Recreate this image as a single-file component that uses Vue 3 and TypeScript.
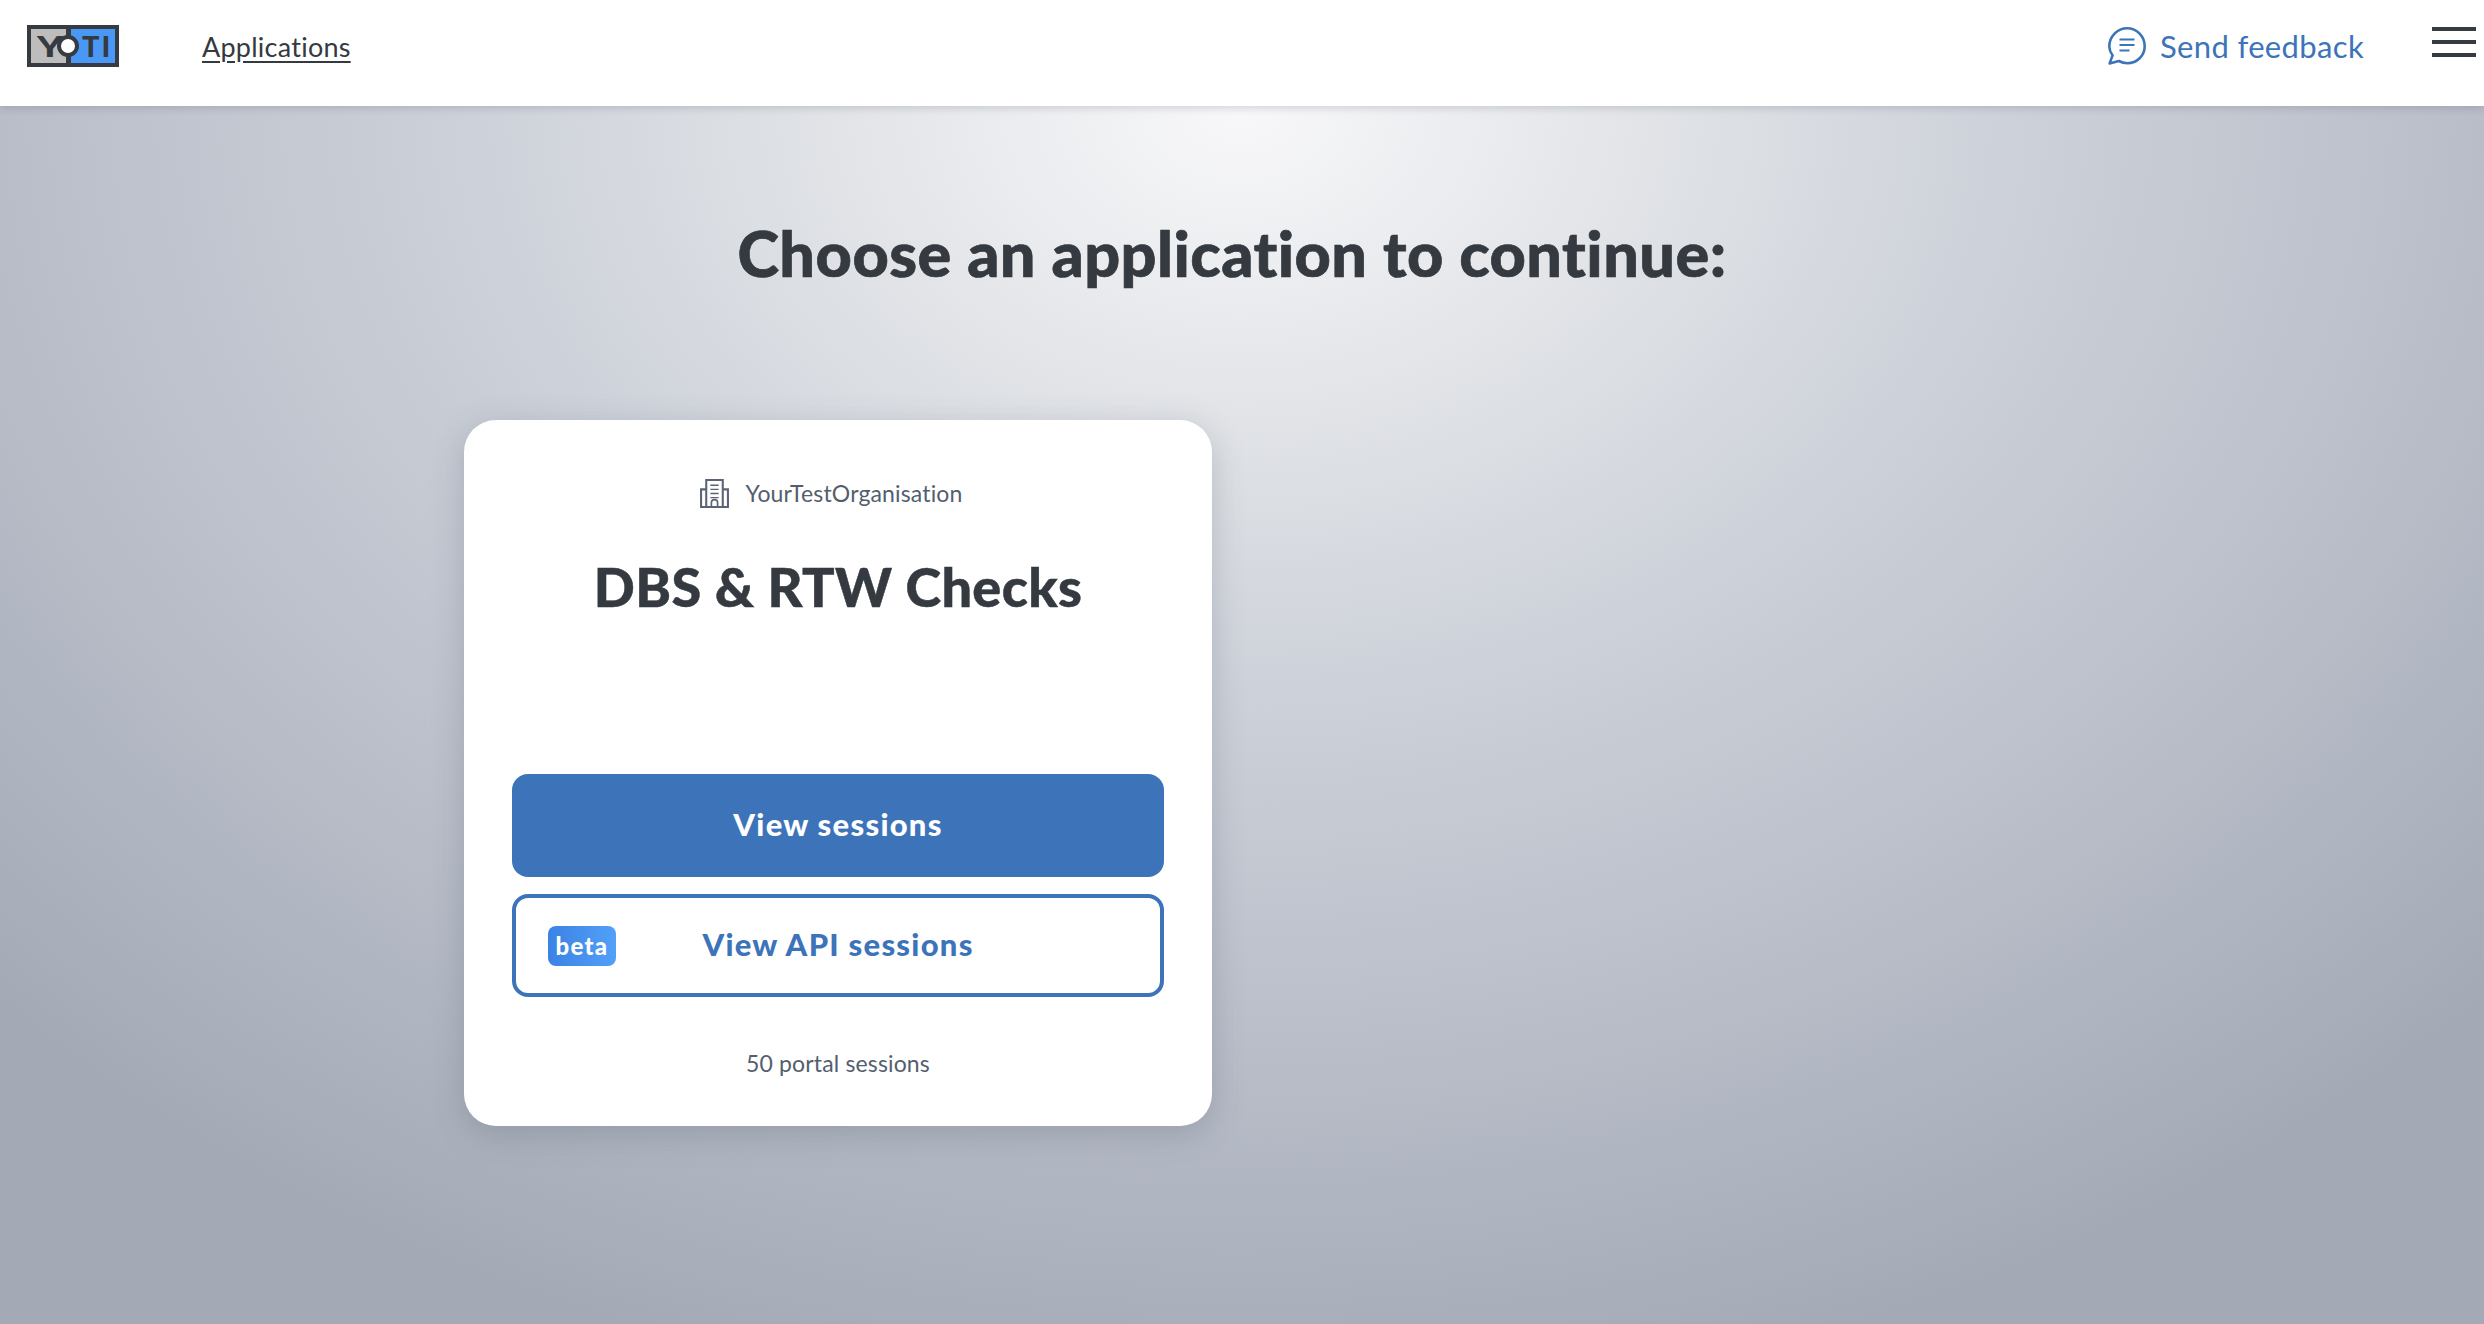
<script setup lang="ts">
const orgName = 'YourTestOrganisation'
const sessionCount = 50
</script>

<template>
  <div class="page">
    <header class="topbar">
      <div class="logo" aria-label="Yoti">
        <span class="logo-y">Y</span>
        <span class="logo-dot"></span>
        <span class="logo-ti">TI</span>
      </div>
      <a class="nav-link">Applications</a>
      <a class="feedback">
        <svg class="feedback-icon" viewBox="0 0 38 38" fill="none" stroke="#3d74b9" stroke-width="2.6">
          <path d="M1.6 36.4 4.6 28.4C2.6 25.6 1.3 23 1.3 19.4 1.3 9.6 9.4 1.3 19.2 1.3S36.7 9.6 36.7 19.2 29 36.2 19.4 36.2c-3.2 0-6-.8-8.6-2.2Z" stroke-linejoin="round" />
          <path d="M11.5 12.5h15M11.5 18h15M11.5 23.5h10" stroke-width="2" />
        </svg>
        Send feedback
      </a>
      <button class="burger" aria-label="Menu"><i></i><i></i><i></i></button>
    </header>

    <main class="content">
      <h1 class="title">Choose an application to continue:</h1>
      <div class="cards">
        <section class="card">
          <div class="org">
            <svg class="org-icon" viewBox="0 0 30 30" fill="none" stroke="#5a6475" stroke-width="2">
              <path d="M7 28V2h16v26M7 11H2v17h26V11h-5" />
              <path d="M11 7h8M11 11h8M11 15h8M11 19h8" stroke-width="1.3" />
              <path d="M12 28v-4a3 3 0 0 1 6 0v4" stroke-width="1.6" />
            </svg>
            <span>{{ orgName }}</span>
          </div>
          <h2 class="card-title">DBS &amp; RTW Checks</h2>
          <button class="btn btn-primary">View sessions</button>
          <button class="btn btn-outline">
            <span class="beta">beta</span>
            View API sessions
          </button>
          <p class="count">{{ sessionCount }} portal sessions</p>
        </section>
      </div>
    </main>
  </div>
</template>

<style>
body {
  margin: 0;
}
</style>

<style scoped>
.page {
  width: 2484px;
  height: 1324px;
  overflow: hidden;
  font-family: Lato, "Noto Sans", sans-serif;
  font-variant-ligatures: none;
  color: #343a40;
  background:
    radial-gradient(ellipse 1700px 1300px at 1240px 106px, #f8f8fa 0%, #e5e7ea 20%, #cdd1d9 45%, #b7bcc7 75%, rgba(165, 172, 184, 0.7) 100%),
    #a0a7b3;
}
.topbar {
  display: flex;
  align-items: center;
  height: 106px;
  background: #fff;
  box-shadow: 0 2px 8px rgba(60, 66, 80, 0.2);
  padding: 0 8px 14px 27px;
  box-sizing: border-box;
}
.logo {
  display: flex;
  align-items: center;
  box-sizing: border-box;
  width: 92px;
  height: 42px;
  border: 4px solid #353b41;
  background: linear-gradient(90deg, #bdbdbd 0 35px, #353b41 35px 40px, #4a98f5 40px);
  font-weight: 900;
  font-size: 29px;
  color: #353b41;
  line-height: 34px;
}
.logo-y {
  flex: none;
  width: 26px;
  margin-left: 6px;
  text-align: center;
  transform: scaleX(1.35);
}
.logo-dot {
  flex: none;
  box-sizing: border-box;
  width: 22px;
  height: 22px;
  margin: 0 3px 0 -6px;
  border: 4px solid #353b41;
  border-radius: 50%;
  background: #fff;
}
.logo-ti {
  letter-spacing: 2px;
}
.nav-link {
  margin-left: 83px;
  font-size: 27px;
  letter-spacing: 0.25px;
  color: #343a40;
  text-decoration: underline;
  text-underline-offset: 4px;
}
.feedback {
  display: flex;
  align-items: center;
  gap: 14px;
  margin-left: auto;
  color: #3d74b9;
  font-size: 31px;
  letter-spacing: 0.35px;
}
.feedback-icon {
  width: 38px;
  height: 38px;
}
.burger {
  display: flex;
  flex-direction: column;
  gap: 9px;
  margin: -8px 0 0 68px;
  padding: 0;
  border: 0;
  background: none;
}
.burger i {
  display: block;
  width: 44px;
  height: 4px;
  background: #353b41;
}
.content {
  width: 1536px;
  margin-left: 464px;
}
.title {
  margin: 109px 0 0;
  height: 205px;
  font-size: 63px;
  line-height: 76px;
  font-weight: 900;
  letter-spacing: 0.45px;
  -webkit-text-stroke: 0.7px #343a40;
  text-align: center;
  color: #343a40;
}
.cards {
  display: grid;
  grid-template-columns: 748px 748px;
  gap: 40px;
}
.card {
  display: flex;
  flex-direction: column;
  align-items: stretch;
  box-sizing: border-box;
  height: 706px;
  padding: 57px 48px 0;
  background: #fff;
  border-radius: 32px;
  box-shadow: 0 8px 32px rgba(70, 78, 95, 0.25);
}
.org {
  display: flex;
  align-items: center;
  justify-content: center;
  gap: 15px;
  height: 32px;
  font-size: 23px;
  letter-spacing: 0.15px;
  color: #545e6e;
  margin-left: -14px;
}
.org-icon {
  width: 31px;
  height: 31px;
}
.card-title {
  margin: 45px 0 0;
  height: 220px;
  font-size: 54px;
  line-height: 66px;
  font-weight: 900;
  letter-spacing: 0.35px;
  -webkit-text-stroke: 0.5px #343a40;
  text-align: center;
  color: #343a40;
}
.btn {
  position: relative;
  box-sizing: border-box;
  height: 103px;
  padding-bottom: 4px;
  border-radius: 16px;
  font-family: inherit;
  font-size: 31px;
  font-weight: 900;
  letter-spacing: 1.25px;
}
.btn-primary {
  border: 0;
  background: #3d74b9;
  color: #fff;
}
.btn-outline {
  margin-top: 17px;
  border: 4px solid #3d74b9;
  background: #fff;
  color: #3d74b9;
}
.beta {
  position: absolute;
  left: 32px;
  top: 28px;
  width: 68px;
  height: 40px;
  border-radius: 8px;
  background: linear-gradient(90deg, #3b82e4, #52a0f8);
  color: #fff;
  font-size: 24px;
  line-height: 39px;
}
.count {
  margin: 52px 0 0;
  font-size: 23px;
  letter-spacing: 0.15px;
  text-align: center;
  color: #545e6e;
}
</style>
